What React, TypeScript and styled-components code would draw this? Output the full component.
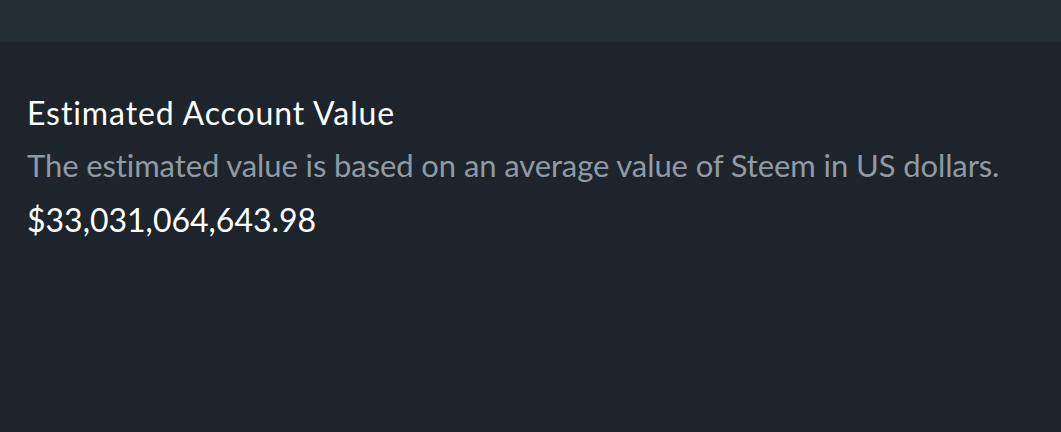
import React from 'react'
import styled, { createGlobalStyle } from 'styled-components'

const Global = createGlobalStyle`
  html, body {
    margin: 0;
    padding: 0;
    background: #1d242b;
  }
  body {
    font-family: 'Lato', 'Noto Sans', sans-serif;
  }
`

const Page = styled.div`
  width: 1061px;
  height: 432px;
  display: flex;
  flex-direction: column;
  background: #1d242b;
  overflow: hidden;
`

const TopBar = styled.div`
  height: 42px;
  flex-shrink: 0;
  background: #222d34;
`

const Section = styled.div`
  padding: 51px 27px 0;
  display: flex;
  flex-direction: column;
`

const Title = styled.h2`
  margin: 0;
  font-size: 32px;
  font-weight: 400;
  line-height: 40px;
  letter-spacing: 0.9px;
  color: #ffffff;
  white-space: nowrap;
`

const Description = styled.p`
  margin: 12px 0 0;
  font-size: 31px;
  line-height: 40px;
  letter-spacing: -0.1px;
  color: #8f9ba4;
  white-space: nowrap;
`

const Amount = styled.div`
  margin-top: 15px;
  font-size: 32px;
  line-height: 40px;
  color: #ffffff;
`

export default function App() {
  return (
    <>
      <Global />
      <Page>
        <TopBar />
        <Section>
          <Title>Estimated Account Value</Title>
          <Description>
            The estimated value is based on an average value of Steem in US dollars.
          </Description>
          <Amount>$33,031,064,643.98</Amount>
        </Section>
      </Page>
    </>
  )
}
